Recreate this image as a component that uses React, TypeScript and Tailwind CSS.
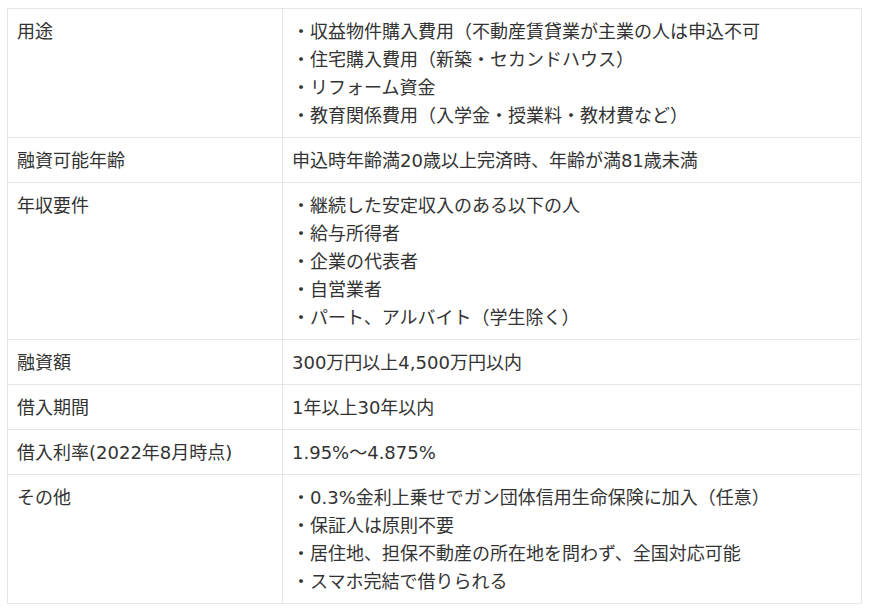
import React from "react";

const rows: { label: string; lines: string[] }[] = [
  {
    label: "用途",
    lines: [
      "・収益物件購入費用（不動産賃貸業が主業の人は申込不可",
      "・住宅購入費用（新築・セカンドハウス）",
      "・リフォーム資金",
      "・教育関係費用（入学金・授業料・教材費など）",
    ],
  },
  { label: "融資可能年齢", lines: ["申込時年齢満20歳以上完済時、年齢が満81歳未満"] },
  {
    label: "年収要件",
    lines: [
      "・継続した安定収入のある以下の人",
      "・給与所得者",
      "・企業の代表者",
      "・自営業者",
      "・パート、アルバイト（学生除く）",
    ],
  },
  { label: "融資額", lines: ["300万円以上4,500万円以内"] },
  { label: "借入期間", lines: ["1年以上30年以内"] },
  { label: "借入利率(2022年8月時点)", lines: ["1.95%～4.875%"] },
  {
    label: "その他",
    lines: [
      "・0.3%金利上乗せでガン団体信用生命保険に加入（任意）",
      "・保証人は原則不要",
      "・居住地、担保不動産の所在地を問わず、全国対応可能",
      "・スマホ完結で借りられる",
    ],
  },
];

export default function App() {
  return (
    <div
      className="w-[870px] h-[614px] bg-white pt-[8px] pl-[7px] text-[#333333] text-[18px] leading-[28px]"
      style={{ fontFamily: '"DejaVu Sans", "Noto Sans CJK JP", sans-serif' }}
    >
      <div className="w-[855px] border border-[#e6e6e6]">
        {rows.map((r, i) => (
          <div key={i} className={i === 0 ? "flex" : "flex border-t border-[#e6e6e6]"}>
            <div className="w-[275px] shrink-0 border-r border-[#e6e6e6] pl-[9px] pt-[9px] pb-[7px]">
              {r.label}
            </div>
            <div className="flex-1 pl-[9px] pt-[9px] pb-[7px]">
              {r.lines.map((l, j) => (
                <div key={j}>{l}</div>
              ))}
            </div>
          </div>
        ))}
      </div>
    </div>
  );
}
